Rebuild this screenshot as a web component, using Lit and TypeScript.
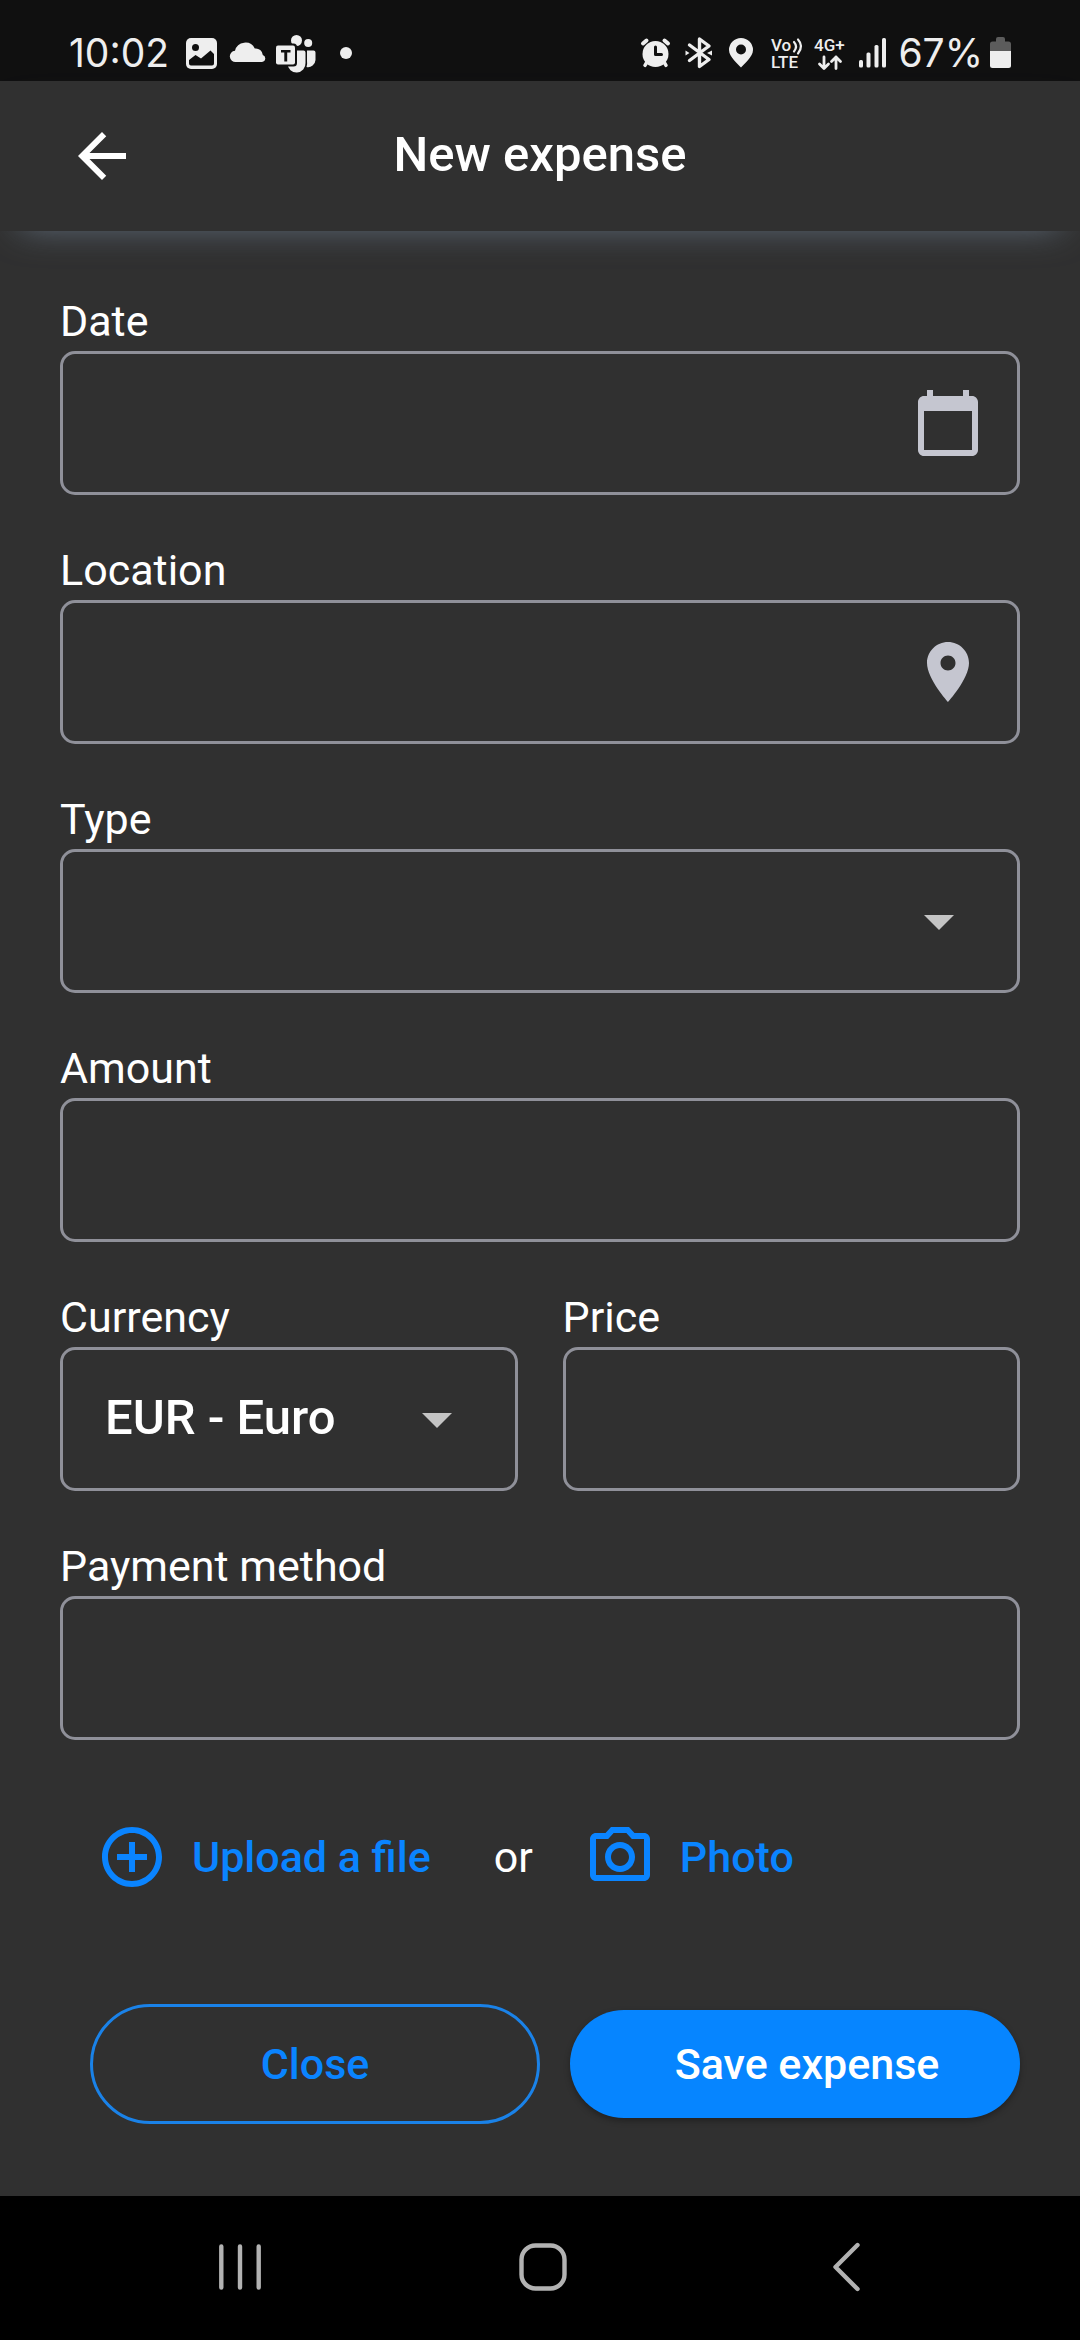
import { LitElement, html, css, svg, nothing } from "lit";
import { customElement, property, state } from "lit/decorators.js";

const ICONS = {
  back: "M20 11H7.83l5.59-5.59L12 4l-8 8 8 8 1.41-1.41L7.83 13H20v-2z",
  calendar:
    "M20 3h-1V1h-2v2H7V1H5v2H4c-1.1 0-2 .9-2 2v16c0 1.1.9 2 2 2h16c1.1 0 2-.9 2-2V5c0-1.1-.9-2-2-2zm0 18H4V8h16v13z",
  place:
    "M12 2C8.13 2 5 5.13 5 9c0 5.25 7 13 7 13s7-7.75 7-13c0-3.87-3.13-7-7-7zm0 9.5c-1.38 0-2.5-1.12-2.5-2.5s1.12-2.5 2.5-2.5 2.5 1.12 2.5 2.5-1.12 2.5-2.5 2.5z",
  dropdown: "M7 10l5 5 5-5z",
  add: "M13 7h-2v4H7v2h4v4h2v-4h4v-2h-4V7zm-1-5C6.48 2 2 6.48 2 12s4.48 10 10 10 10-4.48 10-10S17.52 2 12 2zm0 18c-4.41 0-8-3.59-8-8s3.59-8 8-8 8 3.59 8 8-3.59 8-8 8z",
  camera:
    "M14.12 4l1.83 2H20v12H4V6h4.05l1.83-2h4.24M15 2H9L7.17 4H4c-1.1 0-2 .9-2 2v12c0 1.1.9 2 2 2h16c1.1 0 2-.9 2-2V6c0-1.1-.9-2-2-2h-3.17L15 2zm-3 7c1.65 0 3 1.35 3 3s-1.35 3-3 3-3-1.35-3-3 1.35-3 3-3m0-2c-2.76 0-5 2.24-5 5s2.24 5 5 5 5-2.24 5-5-2.24-5-5-5z",
};

type IconName = keyof typeof ICONS;

@customElement("app-icon")
export class AppIcon extends LitElement {
  @property() name: IconName = "back";

  static styles = css`
    :host {
      display: block;
      flex: none;
      width: 72px;
      height: 72px;
    }
    .glyph {
      display: block;
      width: 100%;
      height: 100%;
      fill: currentColor;
    }
  `;

  render() {
    return html`<svg class="glyph" viewBox="0 0 24 24" aria-hidden="true">
      ${svg`<path d=${ICONS[this.name]} />`}
    </svg>`;
  }
}

@customElement("status-bar")
export class StatusBar extends LitElement {
  static styles = css`
    :host {
      display: flex;
      justify-content: space-between;
      align-items: center;
      height: 81px;
      padding: 0 64px 0 69px;
      box-sizing: border-box;
      background: #101010;
      color: #eeeeee;
      font-family: Inter, Roboto, sans-serif;
      font-size: 39px;
      line-height: 48px;
    }
    .group {
      display: flex;
      align-items: center;
      padding-top: 24px;
    }
    .time {
      min-width: 109px;
    }
    .level {
      min-width: 94px;
      box-sizing: border-box;
      padding-right: 5px;
      text-align: right;
    }
    .sym {
      display: block;
      fill: currentColor;
      stroke: none;
    }
    .line {
      fill: none;
      stroke: currentColor;
      stroke-linecap: round;
      stroke-linejoin: round;
    }
    .cut {
      fill: #101010;
    }
    .cutline {
      fill: none;
      stroke: #101010;
      stroke-linecap: round;
      stroke-linejoin: round;
    }
    .dim {
      fill: #5c5c5c;
    }
    .tiny {
      font-family: Roboto, sans-serif;
      font-size: 17px;
      font-weight: 500;
    }
  `;

  render() {
    return html`
      <div class="group">
        <span class="time">10:02</span>
        <svg class="sym" width="45" height="44" viewBox="178 31 45 44" aria-hidden="true">
          <rect x="186" y="38" width="31" height="31" rx="5" />
          <circle class="cut" cx="195.500" cy="47.500" r="3.500" />
          <path class="cut" d="M189 60l6.500-5 5.500 3.500 9.500-8 3.500 3.500v9.500q0 2-2 2h-21q-2 0-2-2z" />
        </svg>
        <svg class="sym" width="48" height="44" viewBox="223 31 48 44" aria-hidden="true">
          <path d="M236 62a5.600 5.600 0 0 1-1-11.300 10.600 10.600 0 0 1 19.800-2.200 7 7 0 0 1 8 6.500 3.600 3.600 0 0 1-.8 7z" />
        </svg>
        <svg class="sym" width="50" height="44" viewBox="271 31 50 44" aria-hidden="true">
          <circle cx="296.500" cy="40.500" r="5.500" />
          <circle cx="308.200" cy="43" r="4" />
          <path d="M307 50.500h6.500q2 0 2 2v7.500a7.500 7.500 0 0 1-9 7q1-2.500.5-6z" />
          <path d="M287.500 50.500h16q2 0 2 2v10.500a9 9 0 0 1-18 1z" />
          <rect class="cut" x="274" y="43.500" width="23" height="23" rx="3.500" />
          <rect x="276" y="45.500" width="19" height="19" rx="2" />
          <path class="cut" d="M281 50h9.500v2.500h-3.300v9h-2.900v-9H281z" />
        </svg>
        <svg class="sym" width="50" height="44" viewBox="321 31 50 44" aria-hidden="true">
          <circle cx="346" cy="53" r="6" />
        </svg>
      </div>
      <div class="group">
        <svg class="sym" width="44" height="44" viewBox="634 31 44 44" aria-hidden="true">
          <circle cx="655.500" cy="54" r="13" />
          <path class="line" stroke-width="4" d="M643 43.500l3.500-3M668 43.500l-3.500-3" />
          <path class="line" stroke-width="3.500" d="M647 62l-2 3.300M664 62l2 3.300" />
          <path class="cutline" stroke-width="3" d="M655.500 47v7.500h6" />
        </svg>
        <svg class="sym" width="42" height="44" viewBox="678 31 42 44" aria-hidden="true">
          <path class="line" stroke-width="3.400" d="M689.500 45l19.500 14.500-9.500 7v-27.500l9.500 7-19.500 14.500" />
          <path d="M685.500 50.500l4 2.500-4 2.500zM712 50.500l-5 2.500 5 2.500z" />
        </svg>
        <svg class="sym" width="42" height="44" viewBox="720 31 42 44" aria-hidden="true">
          <path d="M741 38a12 12 0 0 0-12 12c0 7 9.500 14.500 12 17.500 2.500-3 12-10.500 12-17.500a12 12 0 0 0-12-12z" />
          <circle class="cut" cx="741" cy="49.500" r="5" />
        </svg>
        <svg class="sym" width="46" height="44" viewBox="762 31 46 44" aria-label="VoLTE">
          <text class="tiny" x="771" y="51">Vo</text>
          <path class="line" stroke-width="2.200" d="M794 42q4 4.500 0 9.500M798 39.500q6 6.500 0 14" />
          <text class="tiny" x="771" y="68">LTE</text>
        </svg>
        <svg class="sym" width="44" height="44" viewBox="808 31 44 44" aria-label="4G+">
          <text class="tiny" x="814" y="51">4G+</text>
          <path class="line" stroke-width="2.800" d="M824 57v11.500M819.500 64l4.500 4.500 4.500-4.500M836 68.500V57M831.500 61.500l4.500-4.500 4.500 4.500" />
        </svg>
        <svg class="sym" width="42" height="44" viewBox="852 31 42 44" aria-hidden="true">
          <rect x="859" y="60" width="4" height="7.500" rx="1.500" />
          <rect x="866.500" y="52.500" width="4" height="15" rx="1.500" />
          <rect x="874.500" y="45" width="4" height="22.500" rx="1.500" />
          <rect x="882" y="38" width="4" height="29.500" rx="1.500" />
        </svg>
        <span class="level">67%</span>
        <svg class="sym" width="28" height="44" viewBox="988 31 28 44" aria-hidden="true">
          <path class="dim" d="M990 51v-7q0-2.500 2.500-2.500h3.500v-2.500q0-2 2-2h5q2 0 2 2v2.500h3.500q2.500 0 2.500 2.500v7z" />
          <path d="M990 51h21v14.500q0 2.500-2.500 2.500h-16q-2.500 0-2.500-2.500z" />
        </svg>
      </div>
    `;
  }
}

@customElement("nav-bar")
export class NavBar extends LitElement {
  static styles = css`
    :host {
      display: grid;
      grid-template-columns: repeat(3, 1fr);
      height: 144px;
      padding: 0 90px;
      box-sizing: border-box;
      background: #000000;
    }
    .key {
      display: grid;
      place-items: center;
      border: 0;
      padding: 0;
      background: none;
      color: #b2b2b2;
    }
    .sym {
      display: block;
      fill: none;
      stroke: currentColor;
      stroke-linecap: round;
      stroke-linejoin: round;
    }
  `;

  render() {
    return html`
      <button class="key" aria-label="Recent apps">
        <svg class="sym" stroke-width="4.400" width="60" height="60" viewBox="210 2238 60 60">
          <path d="M221.300 2246.500v41M240 2246.500v41M258.700 2246.500v41" />
        </svg>
      </button>
      <button class="key" aria-label="Home">
        <svg class="sym" stroke-width="4.400" width="60" height="60" viewBox="509 2238 60 60">
          <rect x="520.500" y="2245.500" width="43" height="43" rx="14" />
        </svg>
      </button>
      <button class="key" aria-label="Back">
        <svg class="sym" stroke-width="4.400" width="60" height="60" viewBox="809 2238 60 60">
          <path d="M856.500 2245l-22 22 22 22" />
        </svg>
      </button>
    `;
  }
}

interface Field {
  id: string;
  label: string;
  icon?: IconName;
  action?: string;
  options?: string[];
}

const ROWS: Field[][] = [
  [{ id: "date", label: "Date", icon: "calendar", action: "Choose date" }],
  [{ id: "location", label: "Location", icon: "place", action: "Choose location" }],
  [{ id: "type", label: "Type", options: [""] }],
  [{ id: "amount", label: "Amount" }],
  [
    { id: "currency", label: "Currency", options: ["EUR - Euro"] },
    { id: "price", label: "Price" },
  ],
  [{ id: "payment", label: "Payment method" }],
];

@customElement("app-root")
export class AppRoot extends LitElement {
  @state() private values: Record<string, string> = { currency: "EUR - Euro" };

  static styles = css`
    :host {
      display: flex;
      flex-direction: column;
      min-height: 100vh;
      background: #303030;
      color: #ffffff;
      font-family: Roboto, "Liberation Sans", sans-serif;
      font-size: 43px;
      line-height: 60px;
    }
    .header {
      position: relative;
      display: grid;
      grid-template-columns: 72px 1fr 72px;
      align-items: center;
      height: 150px;
      padding: 0 66px;
      box-sizing: border-box;
      background: #303030;
      box-shadow: 0 15px 36px -21px #6b7a8c;
    }
    .back,
    .pick {
      display: block;
      border: 0;
      padding: 0;
      background: none;
      color: inherit;
    }
    .title {
      margin: 0;
      padding-bottom: 3px;
      font-size: 49px;
      font-weight: 500;
      text-align: center;
    }
    .form {
      display: flex;
      flex: 1;
      flex-direction: column;
      gap: 45px;
      padding: 60px 60px 72px;
    }
    .row {
      display: grid;
      grid-auto-flow: column;
      grid-auto-columns: minmax(0, 1fr);
      gap: 45px;
    }
    .field {
      display: flex;
      flex-direction: column;
    }
    .box {
      display: grid;
      grid-template-columns: minmax(0, 1fr) auto;
      align-items: center;
      height: 144px;
      box-sizing: border-box;
      border: 3px solid #8f9099;
      border-radius: 15px;
    }
    .control {
      grid-area: 1 / 1 / 2 / 3;
      width: 100%;
      height: 100%;
      box-sizing: border-box;
      margin: 0;
      padding: 0 120px 3px 42px;
      border: 0;
      outline: 0;
      border-radius: 12px;
      appearance: none;
      background: none;
      color: inherit;
      font: 500 49px/60px Roboto, "Liberation Sans", sans-serif;
    }
    .pick {
      grid-area: 1 / 2;
      margin-right: 33px;
      color: #c5c6d0;
    }
    .arrow {
      grid-area: 1 / 2;
      margin-right: 42px;
      color: #c4c4c4;
      pointer-events: none;
    }
    .attach {
      display: flex;
      align-items: center;
      gap: 27px;
      padding: 36px 0 66px;
    }
    .link {
      display: flex;
      align-items: center;
      gap: 24px;
      border: 0;
      padding: 0 36px;
      background: none;
      color: #0a84ff;
      font: inherit;
      font-weight: 500;
    }
    .link.photo {
      padding: 0 24px;
    }
    .actions {
      display: grid;
      grid-template-columns: 1fr 1fr;
      align-items: center;
      gap: 30px;
      padding-left: 30px;
    }
    .close,
    .save {
      box-sizing: border-box;
      border-radius: 60px;
      font: inherit;
      font-weight: 500;
    }
    .close {
      height: 120px;
      border: 3px solid #1a82e8;
      background: none;
      color: #0a84ff;
    }
    .save {
      height: 108px;
      border: 0;
      padding: 0 24px 0 48px;
      background: #0685ff;
      color: #ffffff;
      box-shadow: 0 3px 6px rgba(0, 0, 0, 0.3);
    }
  `;

  private setValue(id: string, e: Event) {
    this.values = { ...this.values, [id]: (e.target as HTMLInputElement).value };
  }

  private renderField(f: Field) {
    const value = this.values[f.id] ?? "";
    return html`
      <div class="field">
        <label for=${f.id}>${f.label}</label>
        <div class="box">
          ${f.options
            ? html`<select class="control" id=${f.id} @change=${(e: Event) => this.setValue(f.id, e)}>
                  ${f.options.map((o) => html`<option value=${o} ?selected=${o === value}>${o}</option>`)}
                </select>
                <app-icon class="arrow" name="dropdown"></app-icon>`
            : html`<input
                class="control"
                id=${f.id}
                type="text"
                .value=${value}
                @input=${(e: Event) => this.setValue(f.id, e)}
              />`}
          ${f.icon
            ? html`<button class="pick" type="button" aria-label=${f.action ?? nothing}>
                <app-icon name=${f.icon}></app-icon>
              </button>`
            : nothing}
        </div>
      </div>
    `;
  }

  render() {
    return html`
      <status-bar></status-bar>
      <header class="header">
        <button class="back" aria-label="Go back"><app-icon name="back"></app-icon></button>
        <h1 class="title">New expense</h1>
      </header>
      <form class="form" @submit=${(e: Event) => e.preventDefault()}>
        ${ROWS.map((row) => html`<div class="row">${row.map((f) => this.renderField(f))}</div>`)}
        <div class="attach">
          <button class="link" type="button"><app-icon name="add"></app-icon>Upload a file</button>
          <span>or</span>
          <button class="link photo" type="button"><app-icon name="camera"></app-icon>Photo</button>
        </div>
        <div class="actions">
          <button class="close" type="button">Close</button>
          <button class="save" type="submit">Save expense</button>
        </div>
      </form>
      <nav-bar></nav-bar>
    `;
  }
}
